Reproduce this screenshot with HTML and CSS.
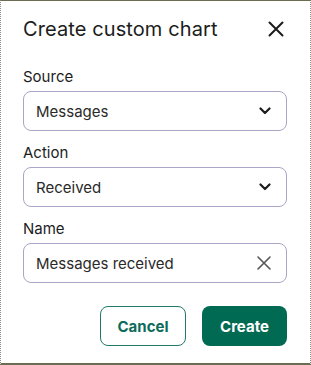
FILE: index.html
```html
<!DOCTYPE html>
<html lang="en">
<head>
    <meta charset="UTF-8">
    <meta name="viewport" content="width=device-width, initial-scale=1.0">
    <title>Create custom chart</title>
    <link rel="stylesheet" href="styles.css">
</head>
<body>
    <div class="dialog">
        <div class="header">
            <h1>Create custom chart</h1>
            <button class="close" aria-label="Close">
                <svg width="16" height="16" viewBox="0 0 16 16"><path d="M1.5 1.5 L14.5 14.5 M14.5 1.5 L1.5 14.5" stroke="#1c1c1c" stroke-width="2" stroke-linecap="round"/></svg>
            </button>
        </div>

        <div class="field">
            <label>Source</label>
            <div class="box">
                <span>Messages</span>
                <svg width="12" height="8" viewBox="0 0 12 8"><path d="M1.5 1.5 L6 6 L10.5 1.5" fill="none" stroke="#1c1c1c" stroke-width="2.2" stroke-linecap="round" stroke-linejoin="round"/></svg>
            </div>
        </div>

        <div class="field">
            <label>Action</label>
            <div class="box">
                <span>Received</span>
                <svg width="12" height="8" viewBox="0 0 12 8"><path d="M1.5 1.5 L6 6 L10.5 1.5" fill="none" stroke="#1c1c1c" stroke-width="2.2" stroke-linecap="round" stroke-linejoin="round"/></svg>
            </div>
        </div>

        <div class="field">
            <label>Name</label>
            <div class="box">
                <span>Messages received</span>
                <svg class="clear" width="14" height="14" viewBox="0 0 14 14"><path d="M1 1 L13 13 M13 1 L1 13" stroke="#555" stroke-width="1.6" stroke-linecap="round"/></svg>
            </div>
        </div>

        <div class="actions">
            <button class="btn cancel">Cancel</button>
            <button class="btn create">Create</button>
        </div>
    </div>
</body>
</html>
```

FILE: styles.css
```css
html, body {
    margin: 0;
    padding: 0;
}
body {
    font-family: Inter, "Noto Sans", sans-serif;
    color: #1c1c1c;
    background: white;
}
.dialog {
    box-sizing: border-box;
    width: 311px;
    height: 365px;
    border-top: 1px solid #6c6c52;
    border-bottom: 2px solid #6c6c52;
    border-left: 1px dotted #8a8a80;
    border-right: 1px dotted #8a8a80;
    padding: 14px 23px 0 22px;
}
.header {
    display: flex;
    justify-content: space-between;
    align-items: center;
    height: 28px;
    margin-bottom: 24px;
}
h1 {
    margin: 0;
    font-size: 20px;
    font-weight: 400;
    letter-spacing: 0.1px;
}
.close {
    border: none;
    background: none;
    padding: 0;
    margin-right: 3px;
    display: flex;
    cursor: pointer;
}
.field {
    display: flex;
    flex-direction: column;
    gap: 4px;
    margin-bottom: 12px;
}
.field label {
    font-size: 15px;
    line-height: 20px;
}
.box {
    display: flex;
    justify-content: space-between;
    align-items: center;
    height: 40px;
    box-sizing: border-box;
    border: 1px solid #aaa6c6;
    border-radius: 8px;
    padding: 0 15px 0 12px;
    font-size: 15px;
    color: #2a2a2a;
}
.actions {
    display: flex;
    justify-content: flex-end;
    gap: 16px;
    margin-top: 23px;
}
.btn {
    height: 40px;
    border-radius: 8px;
    font-family: inherit;
    font-size: 15px;
    font-weight: 700;
    cursor: pointer;
}
.cancel {
    width: 86px;
    background: white;
    border: 1px solid #1f7a6c;
    color: #0d6b5b;
}
.create {
    width: 85px;
    background: #006a53;
    border: none;
    color: white;
}
```
